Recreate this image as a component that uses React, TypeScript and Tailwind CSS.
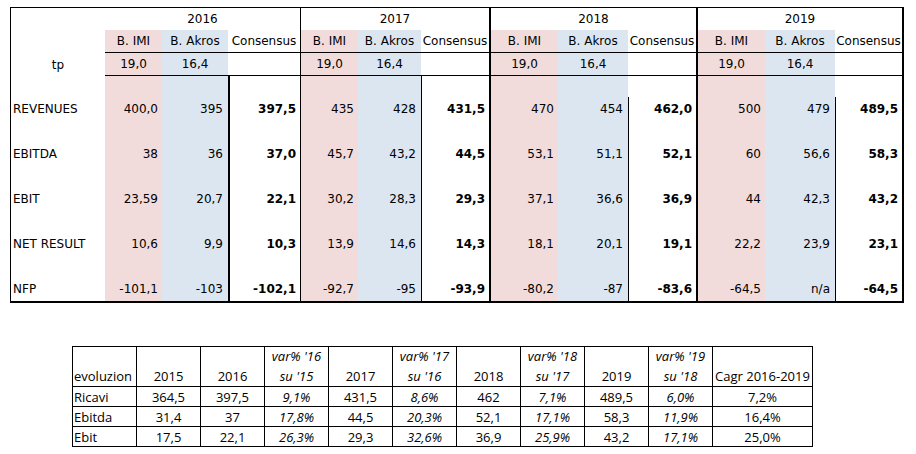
import React from "react";

type Row = { label: string; groups: [string, string, string][] };

const years = ["2016", "2017", "2018", "2019"];

const rows: Row[] = [
  {
    label: "REVENUES",
    groups: [
      ["400,0", "395", "397,5"],
      ["435", "428", "431,5"],
      ["470", "454", "462,0"],
      ["500", "479", "489,5"],
    ],
  },
  {
    label: "EBITDA",
    groups: [
      ["38", "36", "37,0"],
      ["45,7", "43,2", "44,5"],
      ["53,1", "51,1", "52,1"],
      ["60", "56,6", "58,3"],
    ],
  },
  {
    label: "EBIT",
    groups: [
      ["23,59", "20,7", "22,1"],
      ["30,2", "28,3", "29,3"],
      ["37,1", "36,6", "36,9"],
      ["44", "42,3", "43,2"],
    ],
  },
  {
    label: "NET RESULT",
    groups: [
      ["10,6", "9,9", "10,3"],
      ["13,9", "14,6", "14,3"],
      ["18,1", "20,1", "19,1"],
      ["22,2", "23,9", "23,1"],
    ],
  },
  {
    label: "NFP",
    groups: [
      ["-101,1", "-103", "-102,1"],
      ["-92,7", "-95", "-93,9"],
      ["-80,2", "-87", "-83,6"],
      ["-64,5", "n/a", "-64,5"],
    ],
  },
];

// left border of each year block
const groupBorder = ["", "border-l border-black", "border-l-2 border-black", "border-l-2 border-black"];
// left border of the consensus column in the data rows
const consBorder = ["border-l-2 border-black", "border-l border-black", "", ""];

const evoHeader = ["2015", "2016", "var% '16|su '15", "2017", "var% '17|su '16", "2018", "var% '18|su '17", "2019", "var% '19|su '18", "Cagr 2016-2019"];

const evoRows = [
  { label: "Ricavi", values: ["364,5", "397,5", "9,1%", "431,5", "8,6%", "462", "7,1%", "489,5", "6,0%", "7,2%"] },
  { label: "Ebitda", values: ["31,4", "37", "17,8%", "44,5", "20,3%", "52,1", "17,1%", "58,3", "11,9%", "16,4%"] },
  { label: "Ebit", values: ["17,5", "22,1", "26,3%", "29,3", "32,6%", "36,9", "25,9%", "43,2", "17,1%", "25,0%"] },
];

const isVar = (i: number) => i === 2 || i === 4 || i === 6 || i === 8;

const EstimatesTable = () => (
  <div
    className="w-[894px] border-l border-t border-r-2 border-b-2 border-black grid grid-cols-[94px_57px_66px_72px_58px_63px_68px_69px_70px_68px_69px_70px_67px] grid-rows-[22px_23px_23px_repeat(5,45px)] text-[12px] text-black"
    style={{ fontFamily: '"DejaVu Sans", Verdana, sans-serif' }}
  >
    {/* year row */}
    <div />
    {years.map((y, g) => (
      <div key={y} className={`col-span-3 flex items-center justify-center ${groupBorder[g]}`}>
        {y}
      </div>
    ))}

    {/* source row */}
    <div />
    {years.map((y, g) => (
      <React.Fragment key={"h" + y}>
        <div className={`bg-[#f2dcdb] border-b border-b-black flex items-center justify-center ${groupBorder[g]}`}>B. IMI</div>
        <div className="bg-[#dce6f1] border-b border-black flex items-center justify-center">B. Akros</div>
        <div className="border-b border-black flex items-center justify-center">Consensus</div>
      </React.Fragment>
    ))}

    {/* target price row */}
    <div className="flex items-center justify-center">tp</div>
    {years.map((y, g) => (
      <React.Fragment key={"t" + y}>
        <div className={`bg-[#f2dcdb] border-b border-b-black flex items-center justify-center ${groupBorder[g]}`}>19,0</div>
        <div className="bg-[#dce6f1] border-b border-black flex items-center justify-center">16,4</div>
        <div className="border-b border-black" />
      </React.Fragment>
    ))}

    {/* data rows */}
    {rows.map((r, ri) => (
      <React.Fragment key={r.label}>
        <div className="flex items-end pl-[2px] pb-[3px] whitespace-nowrap">{r.label}</div>
        {r.groups.map((v, g) => (
          <React.Fragment key={g}>
            <div className={`bg-[#f2dcdb] flex items-end justify-end pr-[4px] pb-[3px] ${groupBorder[g]}`}>{v[0]}</div>
            <div className="bg-[#dce6f1] flex items-end justify-end pr-[5px] pb-[3px]">{v[1]}</div>
            {g < 2 ? (
              <div className={`flex items-end justify-end pr-[4px] pb-[3px] font-bold ${consBorder[g]}`}>{v[2]}</div>
            ) : (
              <div className="flex flex-col">
                <div
                  className={`flex-1 border-l border-black flex items-end justify-end pr-[4px] pb-[3px] font-bold ${
                    ri === 0 ? "mt-[21px]" : ""
                  }`}
                >
                  {v[2]}
                </div>
              </div>
            )}
          </React.Fragment>
        ))}
      </React.Fragment>
    ))}
  </div>
);

const EvolutionTable = () => (
  <div
    className="w-[741px] border-l border-t border-black grid grid-cols-[64px_repeat(9,64px)_100px] grid-rows-[40px_20px_20px_20px] text-[13px] leading-[20px] text-black"
    style={{ fontFamily: '"Open Sans", "Liberation Sans", sans-serif' }}
  >
    <div className="border-r border-b border-black flex items-end pl-[1px] overflow-hidden whitespace-nowrap">evoluzion</div>
    {evoHeader.map((h, i) => {
      const [a, b] = h.split("|");
      return (
        <div
          key={h}
          className={`border-r border-b border-black flex flex-col justify-end items-center whitespace-nowrap ${isVar(i) ? "italic" : ""}`}
        >
          {b ? (
            <>
              <span>{a}</span>
              <span>{b}</span>
            </>
          ) : (
            <span>{a}</span>
          )}
        </div>
      );
    })}
    {evoRows.map((r) => (
      <React.Fragment key={r.label}>
        <div className="border-r border-b border-black pl-[1px] flex items-center">{r.label}</div>
        {r.values.map((v, i) => (
          <div
            key={i}
            className={`border-r border-b border-black flex items-center justify-center ${isVar(i) ? "italic" : ""}`}
          >
            {v}
          </div>
        ))}
      </React.Fragment>
    ))}
  </div>
);

export default function App() {
  return (
    <div className="w-[916px] h-[454px] bg-white overflow-hidden pt-[7px] pl-[10px]">
      <EstimatesTable />
      <div className="mt-[43px] ml-[62px]">
        <EvolutionTable />
      </div>
    </div>
  );
}
